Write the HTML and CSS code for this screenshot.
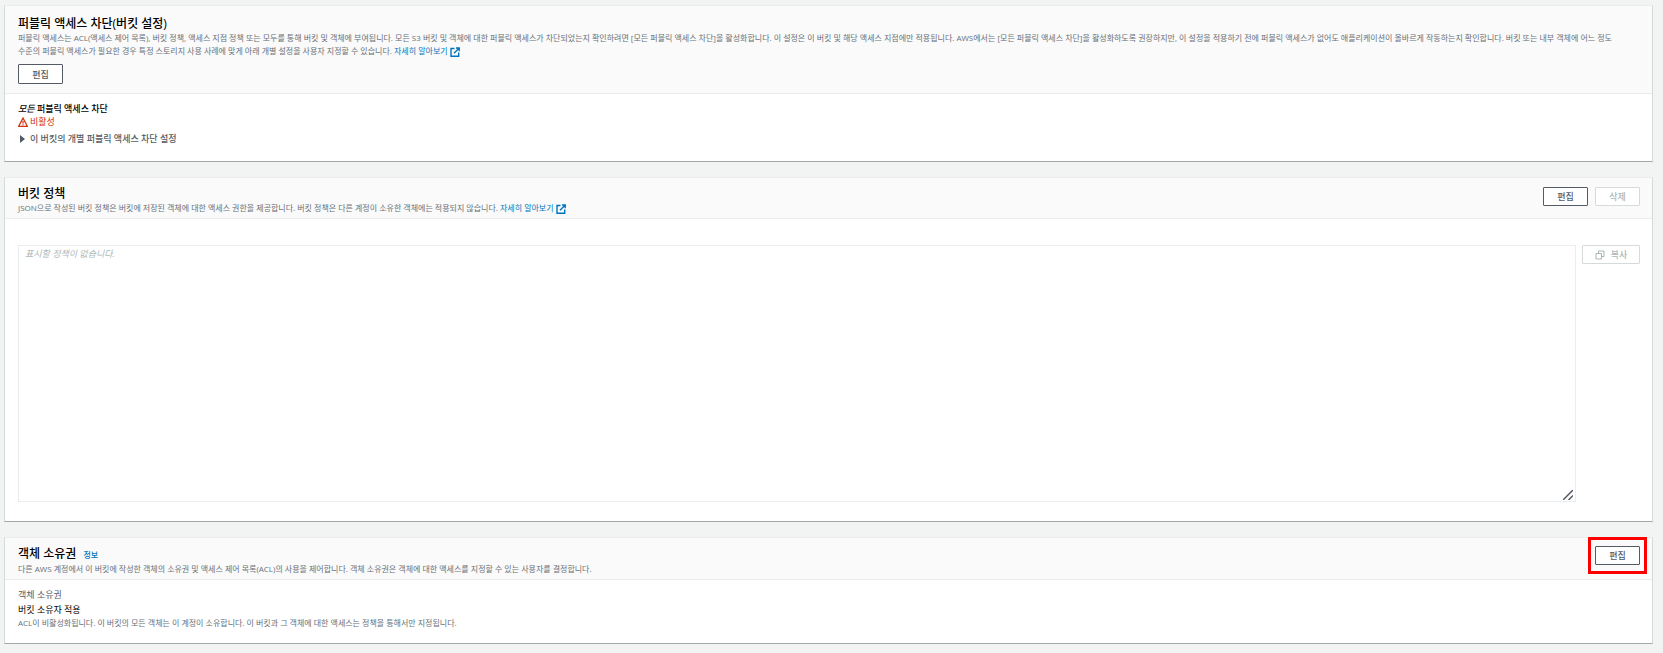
FILE: index.html
```html
<!DOCTYPE html>
<html lang="ko">
<head>
    <meta charset="UTF-8">
    <meta name="viewport" content="width=device-width, initial-scale=1.0">
    <title>버킷 권한</title>
    <link rel="stylesheet" href="styles.css">
</head>
<body>
    <main class="page">
        <!-- 퍼블릭 액세스 차단 -->
        <section class="card">
            <header class="card-header stacked">
                <div>
                    <h2>퍼블릭 액세스 차단(버킷 설정)</h2>
                    <p class="description">퍼블릭 액세스는 ACL(액세스 제어 목록), 버킷 정책, 액세스 지점 정책 또는 모두를 통해 버킷 및 객체에 부여됩니다. 모든 S3 버킷 및 객체에 대한 퍼블릭 액세스가 차단되었는지 확인하려면 [모든 퍼블릭 액세스 차단]을 활성화합니다. 이 설정은 이 버킷 및 해당 액세스 지점에만 적용됩니다. AWS에서는 [모든 퍼블릭 액세스 차단]을 활성화하도록 권장하지만, 이 설정을 적용하기 전에 퍼블릭 액세스가 없어도 애플리케이션이 올바르게 작동하는지 확인합니다. 버킷 또는 내부 객체에 어느 정도<br>
                    수준의 퍼블릭 액세스가 필요한 경우 특정 스토리지 사용 사례에 맞게 아래 개별 설정을 사용자 지정할 수 있습니다. <a href="#">자세히 알아보기<svg class="icon-external" viewBox="0 0 10 10" aria-hidden="true"><path d="M4.500 1.500H1v7.700h7.700V5.500M6 1h3.200v3.200M9 1.200L4 6.200"/></svg></a></p>
                </div>
                <button type="button" class="btn">편집</button>
            </header>
            <div class="card-body">
                <p class="label-strong"><em>모든</em> 퍼블릭 액세스 차단</p>
                <p class="status">
                    <svg class="icon-warning" viewBox="0 0 10 10" aria-hidden="true"><path d="M5 1L9.300 9.300H.7z"/><path d="M5 4v2.500M5 7.300v1"/></svg>
                    비활성
                </p>
                <details>
                    <summary><span class="caret"></span>이 버킷의 개별 퍼블릭 액세스 차단 설정</summary>
                </details>
            </div>
        </section>

        <!-- 버킷 정책 -->
        <section class="card">
            <header class="card-header">
                <div>
                    <h2>버킷 정책</h2>
                    <p class="description">JSON으로 작성된 버킷 정책은 버킷에 저장된 객체에 대한 액세스 권한을 제공합니다. 버킷 정책은 다른 계정이 소유한 객체에는 적용되지 않습니다. <a href="#">자세히 알아보기<svg class="icon-external" viewBox="0 0 10 10" aria-hidden="true"><path d="M4.500 1.500H1v7.700h7.700V5.500M6 1h3.200v3.200M9 1.200L4 6.200"/></svg></a></p>
                </div>
                <div class="actions">
                    <button type="button" class="btn">편집</button>
                    <button type="button" class="btn" disabled>삭제</button>
                </div>
            </header>
            <div class="card-body policy">
                <div class="policy-box">
                    <textarea aria-label="버킷 정책" placeholder="표시할 정책이 없습니다." readonly></textarea>
                    <svg class="icon-resize" viewBox="0 0 10 10" aria-hidden="true"><path d="M0 10L10 0M5.500 10L10 5.500"/></svg>
                </div>
                <button type="button" class="btn btn-copy" disabled>
                    <svg class="icon-copy" viewBox="0 0 10 10" aria-hidden="true"><path d="M1 3.500h5.500V9H1zM3.500 3.500V1H9v5.500H6.500"/></svg>
                    복사
                </button>
            </div>
        </section>

        <!-- 객체 소유권 -->
        <section class="card">
            <header class="card-header">
                <div>
                    <h2>객체 소유권 <a href="#" class="info">정보</a></h2>
                    <p class="description">다른 AWS 계정에서 이 버킷에 작성한 객체의 소유권 및 액세스 제어 목록(ACL)의 사용을 제어합니다. 객체 소유권은 객체에 대한 액세스를 지정할 수 있는 사용자를 결정합니다.</p>
                </div>
                <div class="actions highlight">
                    <button type="button" class="btn">편집</button>
                </div>
            </header>
            <div class="card-body ownership">
                <p class="label">객체 소유권</p>
                <p class="value">버킷 소유자 적용</p>
                <p class="description">ACL이 비활성화됩니다. 이 버킷의 모든 객체는 이 계정이 소유합니다. 이 버킷과 그 객체에 대한 액세스는 정책을 통해서만 지정됩니다.</p>
            </div>
        </section>
    </main>
</body>
</html>
```

FILE: styles.css
```css
* {
    box-sizing: border-box;
}

body {
    margin: 0;
    background-color: #f2f3f3;
    color: #16191f;
    font-family: "Open Sans", "Noto Sans CJK KR", sans-serif;
    font-size: 9px;
    line-height: 13px;
}

h2, p {
    margin: 0;
}

a {
    color: #0073bb;
    text-decoration: none;
}

.page {
    display: flex;
    flex-direction: column;
    gap: 15px;
    padding: 5px 10px 10px 4px;
}

/* 카드 */
.card {
    background-color: #fff;
    border: 1px solid #d5dbdb;
    border-top-color: #eaeded;
    border-bottom-color: #a0a8a8;
}

.card-header {
    display: flex;
    justify-content: space-between;
    align-items: flex-start;
    padding: 9px 12px 4px 13px;
    background-color: #fafafa;
    border-bottom: 1px solid #eaeded;
}

.card-header.stacked {
    flex-direction: column;
    gap: 7px;
    padding: 11px 12px 9px 13px;
}

.card-header h2 {
    color: #000;
    font-size: 12px;
    font-weight: 500;
    line-height: 14px;
}

.card-body {
    padding: 8px 12px 16px 13px;
}

.description {
    color: #687078;
    font-size: 8px;
    line-height: 13px;
}

.info {
    margin-left: 4px;
    font-size: 8px;
}

/* 버튼 */
.actions {
    display: flex;
    gap: 7px;
}

.btn {
    min-width: 45px;
    height: 19px;
    padding: 0 12px;
    background-color: #fff;
    border: 1px solid #545b64;
    border-radius: 1px;
    color: #545b64;
    font-family: inherit;
    font-size: 9px;
    font-weight: 500;
    line-height: 13px;
    white-space: nowrap;
    cursor: pointer;
}

.stacked .btn {
    height: 20px;
}

.btn:disabled {
    border-color: #d5dbdb;
    color: #aab7b8;
    cursor: default;
}

/* 강조 테두리 */
.highlight {
    margin: -10px -7px -5px 0;
    padding: 6px 4px;
    border: 3px solid #f00;
}

/* 상태 */
.label-strong {
    color: #000;
    font-weight: 500;
}

.status {
    display: flex;
    align-items: center;
    gap: 2px;
    color: #d13212;
}

summary {
    display: flex;
    align-items: center;
    gap: 5px;
    margin-top: 4px;
    color: #545b64;
    font-weight: 500;
    list-style: none;
    cursor: pointer;
}

.caret {
    margin-left: 2px;
    border-left: 5px solid #545b64;
    border-top: 4px solid transparent;
    border-bottom: 4px solid transparent;
}

/* 정책 편집 영역 */
.policy {
    display: flex;
    align-items: flex-start;
    gap: 6px;
    padding-top: 26px;
    padding-bottom: 19px;
}

.policy-box {
    position: relative;
    flex: 1;
}

.policy textarea {
    display: block;
    width: 100%;
    height: 257px;
    padding: 1px 6px;
    border: 1px solid #eaeded;
    color: #545b64;
    font-family: inherit;
    font-size: 9px;
    line-height: 14px;
    resize: none;
    outline: none;
}

.policy textarea::placeholder {
    color: #aab7b8;
    font-style: italic;
}

.btn-copy {
    display: flex;
    align-items: center;
    justify-content: center;
    gap: 6px;
    width: 58px;
    padding: 0;
}

.ownership {
    padding-bottom: 14px;
}

.label {
    margin-bottom: 2px;
    color: #545b64;
}

.value {
    color: #000;
}

/* 아이콘 */
svg {
    flex: none;
    fill: none;
    stroke: currentColor;
}

.icon-external {
    width: 10px;
    height: 10px;
    margin-left: 2px;
    vertical-align: -3px;
    stroke-width: 1.4;
}

.icon-warning {
    width: 10px;
    height: 10px;
    stroke-width: 1.3;
}

.icon-copy {
    width: 10px;
    height: 10px;
}

.icon-resize {
    position: absolute;
    right: 3px;
    bottom: 2px;
    width: 10px;
    height: 10px;
    color: #545b64;
    stroke-width: 1.5;
}
```
